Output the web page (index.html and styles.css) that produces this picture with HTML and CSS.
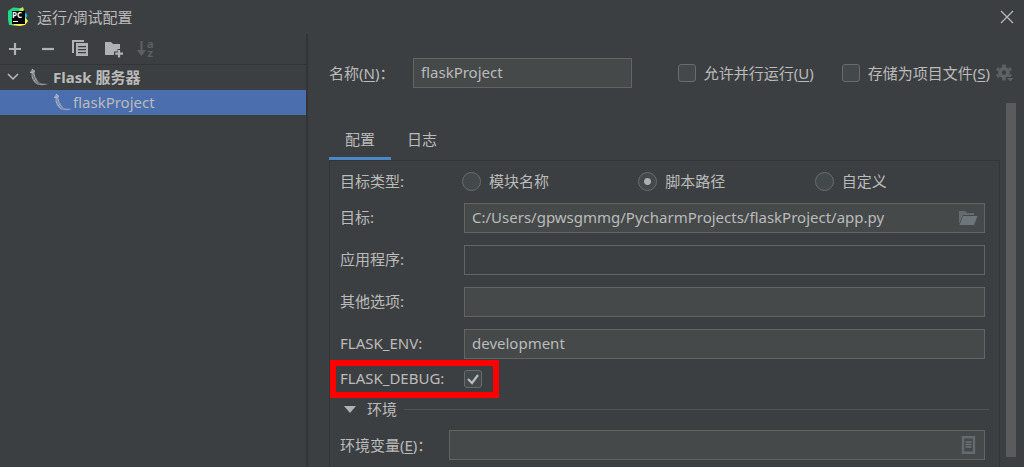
FILE: index.html
```html
<!DOCTYPE html>
<html lang="zh-CN">
<head>
<meta charset="UTF-8" />
<meta name="viewport" content="width=device-width, initial-scale=1" />
<title>运行/调试配置</title>
<link rel="stylesheet" href="styles.css">
</head>
<body>

<!-- Title bar -->
<header class="titlebar">
  <svg class="logo" width="20" height="20" viewBox="0 0 20 20" aria-hidden="true">
    <path d="M0 4 L5 0.5 L11 1 L13 2 L12 10 L4 18 L1 18 L0 12 Z" fill="#21d789" />
    <path d="M11 2 L15 0 L16 3 L13 6 Z" fill="#b8f04a" />
    <path d="M14 4 L18 6 L19.500 9 L17 12 Z" fill="#07c3f2" />
    <path d="M17 10 L20 14 L17 18 L12 19 L2 18 L6 15 Z" fill="#fcf84a" />
    <path d="M1 11 L5 14 L6 18 L2 18 Z" fill="#3be07a" />
    <rect x="4" y="4" width="13" height="13" fill="#000" />
    <text x="4" y="11" class="logo-text">PC</text>
    <rect x="5" y="14" width="5" height="1" fill="#fff" />
  </svg>
  <h1>运行/调试配置</h1>
  <button class="icon-button close" aria-label="关闭">
    <svg width="14" height="14" viewBox="0 0 14 14"><path d="M1 1 L13 13 M13 1 L1 13" stroke="#bbb" stroke-width="1.200" fill="none" /></svg>
  </button>
</header>

<div class="window">

  <!-- Configuration tree -->
  <aside class="sidebar">
    <div class="toolbar">
      <button class="icon-button" aria-label="添加">
        <svg width="20" height="20" viewBox="0 0 20 20"><path d="M10 4 V16 M4 10 H16" stroke="#afb1b3" stroke-width="2.200" /></svg>
      </button>
      <button class="icon-button" aria-label="移除">
        <svg width="20" height="20" viewBox="0 0 20 20"><path d="M4 10 H16" stroke="#afb1b3" stroke-width="2.200" /></svg>
      </button>
      <button class="icon-button" aria-label="复制">
        <svg width="20" height="20" viewBox="0 0 20 20">
          <path d="M1 1 H13 V3 H3 V14 H1 Z" fill="#afb1b3" />
          <path d="M5 4 H17 V17 H5 Z M7 7 V8.300 H15 V7 Z M7 10 V11.300 H15 V10 Z M7 13 V14.300 H15 V13 Z" fill="#afb1b3" fill-rule="evenodd" />
        </svg>
      </button>
      <button class="icon-button" aria-label="新建文件夹">
        <svg width="20" height="20" viewBox="0 0 20 20">
          <path d="M1 3 H7 L9 5 H16 V10 H13.500 V12.500 H10 V16 H1 Z" fill="#afb1b3" />
          <path d="M15 11 V18.500 M11.200 14.700 H19" stroke="#afb1b3" stroke-width="2.200" />
        </svg>
      </button>
      <button class="icon-button sort" aria-label="排序" disabled>
        <svg width="10" height="20" viewBox="0 0 10 20">
          <path d="M4.500 2 V12" stroke="#5e6060" stroke-width="2" />
          <path d="M0 11 H9 L4.500 17 Z" fill="#5e6060" />
        </svg>
        <span class="sort-text">a<br />z</span>
      </button>
    </div>
    <ul class="tree">
      <li class="tree-group">
        <svg width="12" height="12" viewBox="0 0 12 12"><path d="M1 3 L6 8 L11 3" stroke="#bbb" stroke-width="1.500" fill="none" /></svg>
        <svg class="flask" width="20" height="20" viewBox="0 0 20 20">
          <path d="M3 2 L6 4 L5.500 5.500 C6 10 8 14.500 12 16.500 L19 17 C14 19 9 18.500 6 16 C3 13 2 9 2.500 6 L1 5.500 Z" fill="#8d9296" />
          <path d="M3 2 L6 4.500 M1 5.500 L5 5 M3 11 L5.500 8.500 M5 14 L7.500 12" stroke="#b4b7b9" stroke-width="1" />
          <path d="M4 8 C4.500 12 7 15.500 11 17" stroke="#55595c" stroke-width="0.800" fill="none" />
        </svg>
        <span>Flask 服务器</span>
      </li>
      <li class="tree-item selected">
        <svg class="flask" width="20" height="20" viewBox="0 0 20 20">
          <path d="M3 2 L6 4 L5.500 5.500 C6 10 8 14.500 12 16.500 L19 17 C14 19 9 18.500 6 16 C3 13 2 9 2.500 6 L1 5.500 Z" fill="#8f9fbc" />
          <path d="M3 2 L6 4.500 M1 5.500 L5 5 M3 11 L5.500 8.500 M5 14 L7.500 12" stroke="#b4bfd3" stroke-width="1" />
          <path d="M4 8 C4.500 12 7 15.500 11 17" stroke="#5f7db3" stroke-width="0.800" fill="none" />
        </svg>
        <span>flaskProject</span>
      </li>
    </ul>
  </aside>

  <!-- Configuration editor -->
  <main class="editor">
    <div class="name-row">
      <label class="name-label" for="configName">名称(<u>N</u>)：</label>
      <input class="field name-field" type="text" id="configName" value="flaskProject" />
      <label class="check parallel"><input type="checkbox" id="allowParallel" />允许并行运行(<u>U</u>)</label>
      <label class="check"><input type="checkbox" id="storeFile" />存储为项目文件(<u>S</u>)</label>
      <button class="icon-button gear" aria-label="存储选项" disabled>
        <svg width="18" height="18" viewBox="0 0 18 18">
          <path d="M8 4.500 A4 4 0 1 0 8 12.500 A4 4 0 1 0 8 4.500" stroke="#5e6163" stroke-width="3.600" fill="none" />
          <path d="M8 0.500 V3 M8 14 V16.500 M1 4.500 L3 5.700 M13 11.300 L15 12.500 M1 12.500 L3 11.300 M13 5.700 L15 4.500" stroke="#5e6163" stroke-width="3.600" />
          <path d="M10 13 H18 V15 L14 18 L10 15 Z" fill="#3c3f41" />
          <path d="M11 14 H17.500 L14.200 17.500 Z" fill="#5e6163" />
        </svg>
      </button>
    </div>

    <div class="editor-body">
      <div class="config">
        <div class="tabs" role="tablist">
          <button class="tab active" role="tab" aria-selected="true">配置</button>
          <button class="tab" role="tab" aria-selected="false">日志</button>
        </div>

        <div class="panel">
          <div class="row radio-row">
            <span class="row-label" id="targetType">目标类型:</span>
            <div class="radios" role="radiogroup" aria-labelledby="targetType">
              <label class="radio"><input type="radio" name="target" />模块名称</label>
              <label class="radio"><input type="radio" name="target" checked />脚本路径</label>
              <label class="radio"><input type="radio" name="target" />自定义</label>
            </div>
          </div>
          <div class="row">
            <label class="row-label" for="target">目标:</label>
            <div class="field-wrap">
              <input class="field" type="text" id="target" value="C:/Users/gpwsgmmg/PycharmProjects/flaskProject/app.py" />
              <button class="icon-button field-icon" aria-label="浏览">
                <svg width="20" height="18" viewBox="0 0 20 18">
                  <path d="M1 15 V2 H7 L9 4 H16 V6 H5 Z" fill="#636b6f" />
                  <path d="M5 7 H19.500 L16 16 H1.500 Z" fill="#6c767b" />
                </svg>
              </button>
            </div>
          </div>
          <div class="row">
            <label class="row-label" for="application">应用程序:</label>
            <div class="field-wrap"><input class="field plain" type="text" id="application" /></div>
          </div>
          <div class="row">
            <label class="row-label" for="options">其他选项:</label>
            <div class="field-wrap"><input class="field" type="text" id="options" /></div>
          </div>
          <div class="row">
            <label class="row-label" for="flaskEnv">FLASK_ENV:</label>
            <div class="field-wrap"><input class="field" type="text" id="flaskEnv" value="development" /></div>
          </div>
          <div class="row debug-row">
            <label class="row-label" for="flaskDebug">FLASK_DEBUG:</label>
            <input type="checkbox" id="flaskDebug" checked />
            <div class="highlight"></div>
          </div>
          <div class="section">
            <svg width="12" height="8" viewBox="0 0 12 8"><path d="M0 1 H12 L6 8 Z" fill="#afb1b3" /></svg>
            <h2>环境</h2>
            <hr />
          </div>
          <div class="row env-row">
            <label class="row-label env-label" for="envVars">环境变量(<u>E</u>)：</label>
            <div class="field-wrap">
              <input class="field" type="text" id="envVars" />
              <button class="icon-button field-icon" aria-label="编辑环境变量">
                <svg width="20" height="18" viewBox="0 0 20 18">
                  <path d="M5 1.200 H16 V16.800 H5 Z" stroke="#636b70" stroke-width="2.400" fill="none" />
                  <path d="M7.500 6 H13.500 M7.500 8.500 H13.500 M7.500 11 H13.500" stroke="#6c7377" stroke-width="1.300" />
                </svg>
              </button>
            </div>
          </div>
        </div>
      </div>
      <div class="scrollbar"></div>
    </div>
  </main>
</div>

</body>
</html>
```
FILE: styles.css
```css
* {
  box-sizing: border-box;
}
body {
  margin: 0;
  min-height: 100vh;
  display: flex;
  flex-direction: column;
  background: #3c3f41;
  color: #bbbbbb;
  font-family: "Noto Sans", "Noto Sans CJK SC", sans-serif;
  font-size: 15px;
  line-height: 20px;
}
svg {
  display: block;
  flex: none;
}
u {
  text-underline-offset: 2px;
}
.icon-button {
  padding: 0;
  border: none;
  background: none;
}

/* title bar */
.titlebar {
  display: flex;
  align-items: center;
  height: 34px;
  padding: 0 10px 0 8px;
}
.titlebar h1 {
  flex: 1;
  margin: 0 0 0 9px;
  font-size: 15px;
  font-weight: normal;
}
.logo-text {
  font: bold 8px "Open Sans", sans-serif;
  fill: #fff;
}
.window {
  flex: 1;
  display: flex;
}

/* sidebar */
.sidebar {
  width: 308px;
  flex: none;
  border-right: 2px solid #323436;
}
.toolbar {
  display: flex;
  align-items: center;
  gap: 13px;
  height: 31px;
  padding-left: 5px;
  border-bottom: 1px solid #323436;
}
.sort {
  display: flex;
  align-items: center;
}
.sort-text {
  padding-bottom: 2px;
  font: bold 11px/9px "Noto Sans", sans-serif;
  color: #5e6060;
}
.tree {
  margin: 0;
  padding: 0;
  list-style: none;
}
.tree li {
  display: flex;
  align-items: center;
  height: 25px;
  padding-bottom: 1px;
}
.tree .tree-group {
  padding-left: 7px;
  font-weight: bold;
}
.tree-group .flask {
  margin: 0 4px 0 10px;
}
.tree .tree-item {
  padding-left: 53px;
}
.selected {
  background: #4b6eaf;
}

/* editor */
.editor {
  flex: 1;
  min-width: 0;
  display: flex;
  flex-direction: column;
  padding: 24px 8px 0 21px;
}
.name-row {
  display: flex;
  align-items: center;
}
.name-label {
  width: 84px;
}
.field {
  display: block;
  width: 100%;
  height: 30px;
  padding: 0 7px 2px;
  border: 1px solid #646464;
  background: #45494a;
  color: #bbbbbb;
  font: inherit;
  outline: none;
}
.name-field {
  width: 219px;
}
.plain {
  background: #3c3f41;
}
.check {
  display: flex;
  align-items: center;
  margin-right: 28px;
  white-space: nowrap;
}
.parallel {
  margin-left: auto;
}
.gear {
  margin: 0 2px 0 -22px;
}
input[type=checkbox],
input[type=radio] {
  appearance: none;
  flex: none;
  margin: 0;
  border: 1px solid #6b6b6b;
  background: #43494a;
}
input[type=checkbox] {
  width: 18px;
  height: 18px;
  border-radius: 3px;
}
.check input[type=checkbox] {
  margin-right: 8px;
}
input[type=checkbox]:checked {
  background: #43494a url("data:image/svg+xml,%3Csvg xmlns='http://www.w3.org/2000/svg' viewBox='0 0 16 16'%3E%3Cpath d='M3 8 L7 12 L13 4' fill='none' stroke='%23bbb' stroke-width='2.200'/%3E%3C/svg%3E") center / 16px no-repeat;
}
input[type=radio] {
  width: 19px;
  height: 19px;
  border-radius: 50%;
}
input[type=radio]:checked {
  background: radial-gradient(circle, #afafaf 3px, #43494a 4px);
}

.editor-body {
  flex: 1;
  display: flex;
}
.config {
  flex: 1;
  min-width: 0;
  display: flex;
  flex-direction: column;
  margin-top: 32px;
}
.tabs {
  display: flex;
}
.tab {
  height: 40px;
  padding: 0 16px;
  border: none;
  border-bottom: 3px solid transparent;
  background: none;
  color: #bbbbbb;
  font: inherit;
}
.active {
  border-bottom-color: #4a88c7;
}
.panel {
  flex: 1;
  padding: 10px 14px 7px 10px;
  border: 1px solid #323436;
  border-bottom: none;
}
.row {
  display: flex;
  align-items: center;
  margin-bottom: 12px;
}
.row-label {
  width: 124px;
  flex: none;
  padding-bottom: 2px;
}
.radio-row {
  height: 20px;
}
.radio-row .row-label {
  padding-bottom: 0;
}
.radios {
  flex: 1;
  display: grid;
  grid-template-columns: repeat(3, 1fr);
  gap: 6px;
  margin-left: -2px;
}
.radio {
  display: flex;
  align-items: center;
  gap: 8px;
}
.field-wrap {
  flex: 1;
  position: relative;
}
.field-icon {
  position: absolute;
  right: 7px;
  top: 6px;
}
.debug-row {
  position: relative;
  height: 16px;
}
.highlight {
  position: absolute;
  left: -10px;
  top: -11px;
  width: 169px;
  height: 38px;
  border: 6px solid #ff0000;
}
.section {
  display: flex;
  align-items: center;
  height: 20px;
  margin: 0 -4px 11px 4px;
}
.section h2 {
  margin: 0 7px 0 11px;
  font-size: 15px;
  font-weight: normal;
}
.section hr {
  flex: 1;
  margin: 0;
  border: none;
  border-top: 1px solid #515151;
}
.env-row {
  margin-bottom: 0;
}
.env-row .env-label {
  width: 109px;
  padding-bottom: 0;
}
.scrollbar {
  width: 10px;
  margin: 15px 0 10px 6px;
  background: #595b5d;
}
```
